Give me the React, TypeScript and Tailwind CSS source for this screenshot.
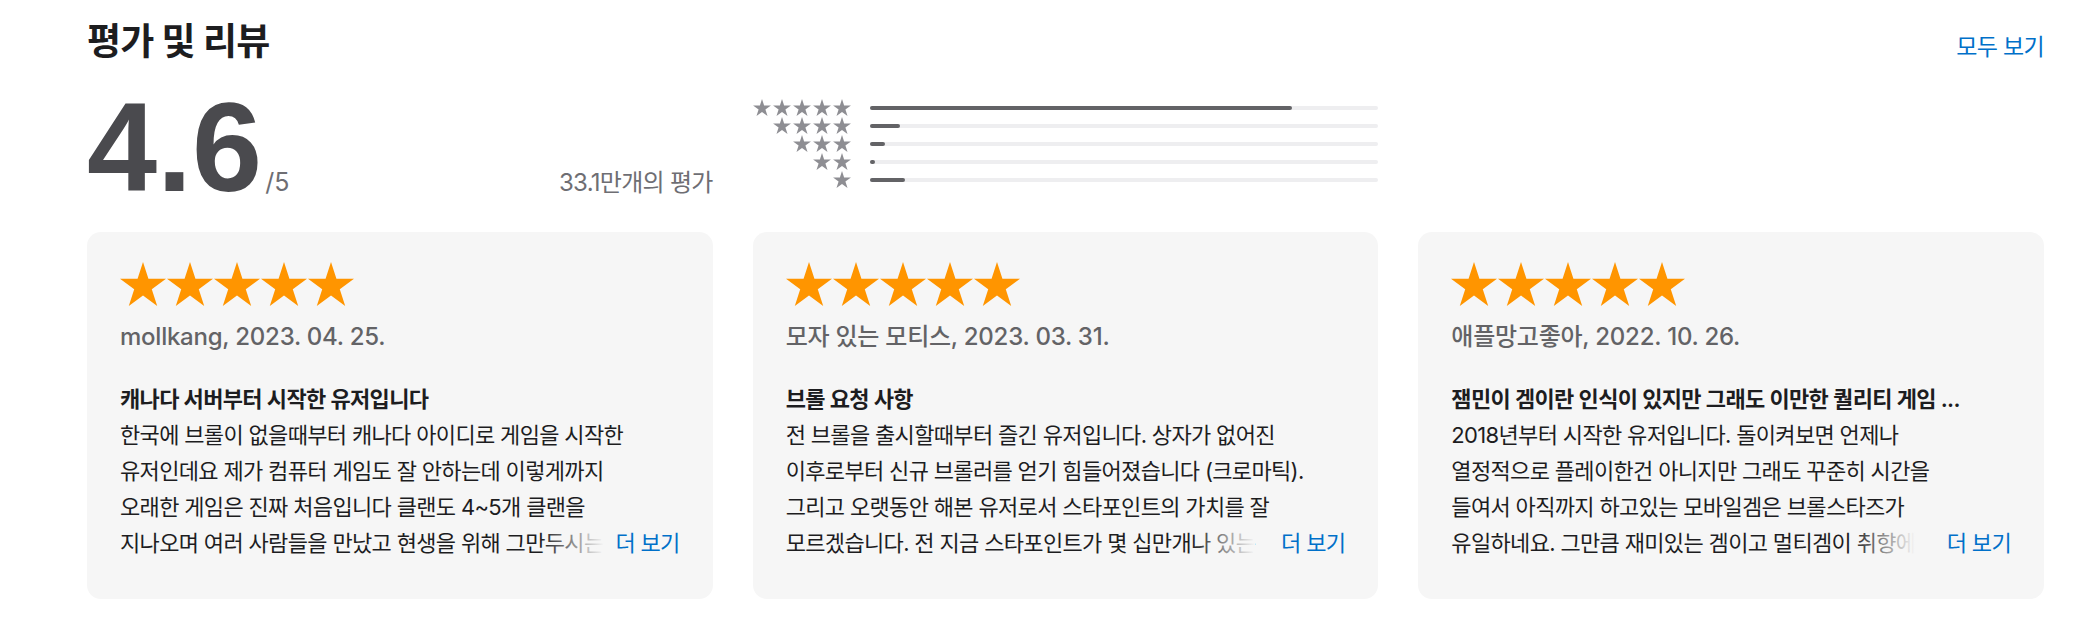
const font = "font-['Inter','Noto_Sans_CJK_KR',sans-serif]";

function Star({ className }: { className?: string }) {
  return (
    <svg viewBox="2.45 2 95.1 90.45" className={className} fill="currentColor" aria-hidden="true">
      <polygon points="50,2 61.23,36.55 97.55,36.55 68.17,57.9 79.39,92.45 50,71.1 20.61,92.45 31.83,57.9 2.45,36.55 38.77,36.55" />
    </svg>
  );
}

const histogram = [
  { stars: 5, pct: 83 },
  { stars: 4, pct: 6 },
  { stars: 3, pct: 3 },
  { stars: 2, pct: 1 },
  { stars: 1, pct: 7 },
];

const reviews = [
  {
    author: "mollkang, 2023. 04. 25.",
    title: "캐나다 서버부터 시작한 유저입니다",
    lines: [
      "한국에 브롤이 없을때부터 캐나다 아이디로 게임을 시작한",
      "유저인데요 제가 컴퓨터 게임도 잘 안하는데 이렇게까지",
      "오래한 게임은 진짜 처음입니다 클랜도 4~5개 클랜을",
      "지나오며 여러 사람들을 만났고 현생을 위해 그만두시는",
    ],
  },
  {
    author: "모자 있는 모티스, 2023. 03. 31.",
    title: "브롤 요청 사항",
    lines: [
      "전 브롤을 출시할때부터 즐긴 유저입니다. 상자가 없어진",
      "이후로부터 신규 브롤러를 얻기 힘들어졌습니다 (크로마틱).",
      "그리고 오랫동안 해본 유저로서 스타포인트의 가치를 잘",
      "모르겠습니다. 전 지금 스타포인트가 몇 십만개나 있는",
    ],
  },
  {
    author: "애플망고좋아, 2022. 10. 26.",
    title: "잼민이 겜이란 인식이 있지만 그래도 이만한 퀄리티 게임 ...",
    lines: [
      "2018년부터 시작한 유저입니다. 돌이켜보면 언제나",
      "열정적으로 플레이한건 아니지만 그래도 꾸준히 시간을",
      "들여서 아직까지 하고있는 모바일겜은 브롤스타즈가",
      "유일하네요. 그만큼 재미있는 겜이고 멀티겜이 취향에",
    ],
  },
];

function ReviewCard({ review }: { review: (typeof reviews)[number] }) {
  const body = review.lines.slice(0, -1);
  const last = review.lines[review.lines.length - 1];
  return (
    <div className="rounded-[14px] bg-[#f6f6f6] px-[33px] pt-[30px] pb-[38px]">
      <div className="flex gap-[1px] text-[#ff9500]">
        {[0, 1, 2, 3, 4].map((i) => (
          <Star key={i} className="h-[44px] w-[46px]" />
        ))}
      </div>
      <div className="mt-[13px] text-[24px] leading-[36px] font-medium tracking-[-0.01em] text-[#636366]">
        {review.author}
      </div>
      <div className="mt-[26px] text-[22px] leading-[36px] tracking-[-0.03em] text-[#1d1d1f]">
        <div className="truncate font-semibold">{review.title}</div>
        {body.map((line, i) => (
          <div key={i} className="whitespace-nowrap">
            {line}
          </div>
        ))}
        <div className="flex">
          <div className="min-w-0 flex-1 overflow-hidden whitespace-nowrap">
            <span className="relative">
              {last}
              {/* fade on the last few characters before the link */}
              <span className="absolute inset-y-0 right-0 w-[64px] bg-linear-to-r from-[#f6f6f6]/0 to-[#f6f6f6]" />
            </span>
          </div>
          <a href="#" className="shrink-0 text-[#0070c9]">
            더 보기
          </a>
        </div>
      </div>
    </div>
  );
}

export default function App() {
  return (
    <div className={`min-h-screen bg-white pl-[87px] pr-[48px] pt-[20px] ${font}`}>
      <div className="flex items-baseline justify-between">
        <h2 className="text-[37px] leading-[44px] font-bold tracking-[-0.02em] text-[#1d1d1f]">평가 및 리뷰</h2>
        <a href="#" className="text-[23px] tracking-[-0.03em] text-[#0070c9]">
          모두 보기
        </a>
      </div>

      <div className="mt-[20px] grid grid-cols-3 gap-x-10">
        <div className="flex items-baseline justify-between">
          <div className="flex items-baseline">
            <span className="font-['Liberation_Sans',sans-serif] text-[126px] leading-none font-bold text-[#4a4a4e]">
              4.6
            </span>
            <span className="ml-[3px] text-[25px] text-[#6e6e73]">/5</span>
          </div>
          <span className="text-[24px] tracking-[-0.03em] text-[#6e6e73]">33.1만개의 평가</span>
        </div>

        <div className="pt-[14px]">
          {histogram.map((row) => (
            <div key={row.stars} className="flex h-[18px] items-center">
              <div className="flex w-[98px] justify-end gap-[2px] text-[#8e8e93]">
                {Array.from({ length: row.stars }).map((_, i) => (
                  <Star key={i} className="h-[17px] w-[18px]" />
                ))}
              </div>
              <div className="ml-[19px] h-[4px] flex-1 rounded-full bg-[#eeeef0]">
                <div className="h-full rounded-full bg-[#636366]" style={{ width: `${row.pct}%` }} />
              </div>
            </div>
          ))}
        </div>
        <div />
      </div>

      <div className="mt-[21px] grid grid-cols-3 gap-x-10">
        {reviews.map((r) => (
          <ReviewCard key={r.author} review={r} />
        ))}
      </div>
    </div>
  );
}
